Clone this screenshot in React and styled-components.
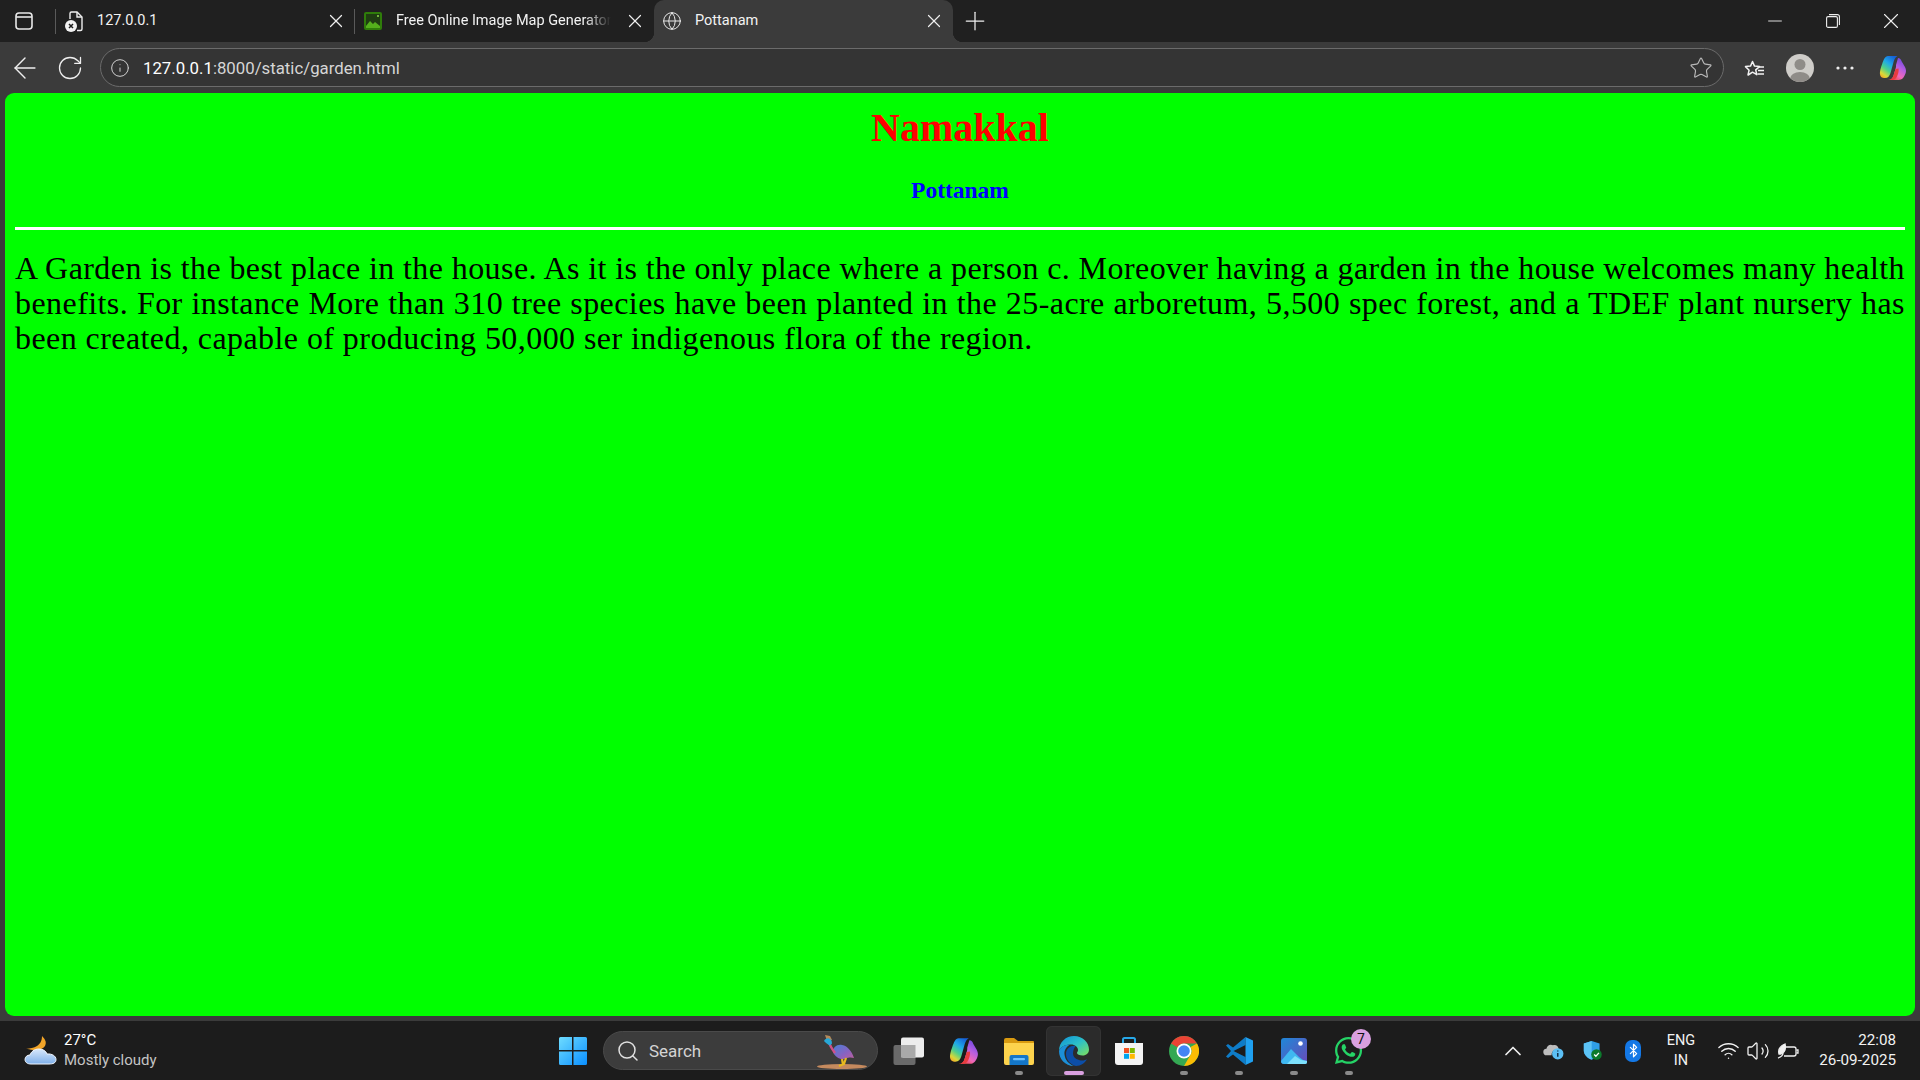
import React from 'react';
import styled, { createGlobalStyle } from 'styled-components';
import { X, Plus, ArrowLeft, RotateCw, Info, Star, Globe, Search, ChevronUp, Wifi, Volume2, Minus, Bluetooth } from 'lucide-react';
import { FaWhatsapp } from 'react-icons/fa';

const Global = createGlobalStyle`
    html, body { margin: 0; padding: 0; height: 100%; background: #1c1c1c; overflow: hidden; }
    #root { height: 100%; }
    * { box-sizing: border-box; }
`;

const Screen = styled.div`
    height: 1080px;
    width: 1920px;
    display: flex;
    flex-direction: column;
    font-family: Roboto, "Noto Sans", sans-serif;
    color: #fff;
`;

/* tab strip */
const TabStrip = styled.div`
    height: 42px;
    flex: none;
    display: flex;
    align-items: stretch;
    padding: 0 0 1px 6px;
    background: #202020;
`;

const SideButton = styled.div`
    width: 50px;
    padding-left: 9px;
    display: flex;
    align-items: center;
`;

const Tab = styled.div`
    position: relative;
    width: 299px;
    margin-bottom: ${p => (p.$active ? '-1px' : '0')};
    display: flex;
    align-items: center;
    padding: 0 8px ${p => (p.$active ? '1px' : '0')} 8px;
    gap: 13px;
    font-size: 14.5px;
    color: #f2f2f2;
    border-radius: ${p => (p.$active ? '10px 10px 0 0' : '0')};
    background: ${p => (p.$active ? '#3b3b3b' : 'transparent')};
    ${p => p.$active && `
        &::before, &::after {
            content: "";
            position: absolute;
            bottom: 0;
            width: 10px;
            height: 10px;
        }
        &::before { left: -10px; background: radial-gradient(circle at 0 0, transparent 10px, #3b3b3b 10.5px); }
        &::after { right: -10px; background: radial-gradient(circle at 100% 0, transparent 10px, #3b3b3b 10.5px); }
    `}
    ${p => p.$divider && `
        &::before {
            content: "";
            position: absolute;
            left: -1px;
            top: 9px;
            height: 25px;
            width: 1px;
            background: #5a5a5a;
        }
    `}
`;

const TabIcon = styled.span`
    width: 20px;
    height: 20px;
    flex: none;
    display: flex;
    align-items: center;
    justify-content: center;
`;

const TabTitle = styled.span`
    flex: 1;
    white-space: nowrap;
    overflow: hidden;
    ${p => p.$fade && `
        -webkit-mask-image: linear-gradient(to right, #000 88%, transparent 100%);
        mask-image: linear-gradient(to right, #000 88%, transparent 100%);
    `}
`;

const NewTab = styled.div`
    width: 44px;
    display: flex;
    align-items: center;
    justify-content: center;
`;

const WindowButtons = styled.div`
    margin-left: auto;
    display: flex;
`;

const WindowButton = styled.div`
    width: 58px;
    display: flex;
    align-items: center;
    justify-content: center;
`;

/* address bar row */
const Toolbar = styled.div`
    height: 51px;
    flex: none;
    display: flex;
    align-items: center;
    padding: 0 2px;
    background: #3b3b3b;
`;

const ToolButton = styled.div`
    width: ${p => p.$w || 45}px;
    height: 40px;
    flex: none;
    display: flex;
    align-items: center;
    justify-content: center;
`;

const AddressBar = styled.div`
    flex: 1;
    height: 39px;
    margin: 0 8px 0 8px;
    padding: 0 10px 0 9px;
    display: flex;
    align-items: center;
    gap: 13px;
    border: 1px solid #6b6b6b;
    border-radius: 20px;
    background: #343434;
`;

const Url = styled.span`
    flex: 1;
    font-size: 16.8px;
    color: #d6d6d6;
    span { color: #fff; }
`;

/* the page */
const PageFrame = styled.div`
    flex: 1;
    padding: 0 5px 5px;
    background: #3b3b3b;
    min-height: 0;
`;

const Page = styled.main`
    height: 100%;
    padding: 0 10px;
    background: #00ff00;
    border-radius: 9px;
    font-family: "Liberation Serif", "Times New Roman", serif;
    color: #000;
`;

const Title = styled.h1`
    margin: 0;
    padding-top: 11px;
    font-size: 40px;
    font-weight: bold;
    text-align: center;
    color: #ff0000;
`;

const SubTitle = styled.h2`
    margin: 26px 0 0;
    font-size: 23.5px;
    font-weight: bold;
    text-align: center;
    color: #0000ff;
`;

const Rule = styled.hr`
    margin: 23px 0 0;
    height: 3px;
    border: 0;
    background: #fff;
`;

const Article = styled.div`
    margin-top: 21px;
    font-size: 32px;
    line-height: 34.8px;
    letter-spacing: 0.43px;
`;

const Line = styled.div`
    word-spacing: ${p => (p.$last ? '0' : '-3px')};
    text-align: ${p => (p.$last ? 'left' : 'justify')};
    text-align-last: ${p => (p.$last ? 'left' : 'justify')};
`;

/* taskbar */
const Taskbar = styled.footer`
    height: 59px;
    flex: none;
    display: flex;
    align-items: center;
    background: #1c1c1c;
`;

const Weather = styled.div`
    width: 545px;
    flex: none;
    padding-left: 22px;
    display: flex;
    align-items: center;
    gap: 6px;
`;

const WeatherText = styled.div`
    padding-bottom: 2px;
    font-size: 15px;
    line-height: 20px;
    color: #fff;
    small { display: block; font-size: 15px; color: #c4c4c4; }
`;

const TaskItem = styled.div`
    position: relative;
    width: ${p => p.$w || 55}px;
    height: 50px;
    flex: none;
    display: flex;
    align-items: center;
    justify-content: center;
    border-radius: 6px;
    ${p => p.$active && `
        background: #2b2b2b;
        box-shadow: inset 0 0 0 1px #333;
    `}
    ${p => (p.$running || p.$active) && `
        &::after {
            content: "";
            position: absolute;
            bottom: 1px;
            left: 50%;
            transform: translateX(-50%);
            width: ${p.$active ? 20 : 8}px;
            height: 4px;
            border-radius: 2px;
            background: ${p.$active ? '#d9a0e0' : '#8a8a8a'};
        }
    `}
`;

const SearchBox = styled.div`
    width: 275px;
    height: 39px;
    flex: none;
    margin: 0 3px;
    padding: 0 8px 0 12px;
    display: flex;
    align-items: center;
    gap: 9px;
    border: 1px solid #4a4a4a;
    border-radius: 20px;
    background: #3c3c3c;
    font-size: 17px;
    color: #d4d4d4;
    span { flex: 1; }
`;

const Badge = styled.span`
    position: absolute;
    top: 3px;
    right: 5px;
    width: 20px;
    height: 20px;
    border-radius: 50%;
    display: flex;
    align-items: center;
    justify-content: center;
    font-size: 14px;
    background: #d9a0e0;
    color: #111;
`;

const Tray = styled.div`
    margin-left: auto;
    display: flex;
    align-items: center;
    padding-right: 24px;
`;

const TrayIcon = styled.div`
    width: ${p => p.$w || 40}px;
    height: 30px;
    flex: none;
    display: flex;
    align-items: center;
    justify-content: center;
`;

const TrayText = styled.div`
    width: ${p => p.$w || 56}px;
    flex: none;
    font-size: 14.5px;
    line-height: 20px;
    text-align: center;
    color: #f2f2f2;
`;

const Clock = styled(TrayText)`
    width: 93px;
    padding-bottom: 2px;
    font-size: 15.2px;
    text-align: right;
`;

const BluetoothPill = styled.span`
    width: 16px;
    height: 22px;
    border-radius: 7px;
    background: #1478e6;
    display: flex;
    align-items: center;
    justify-content: center;
`;

const SidebarIcon = () => (
    <svg width="18" height="18" viewBox="0 0 18 18" fill="none" stroke="#e8e8e8" strokeWidth="1.6">
        <rect x="1" y="1" width="16" height="16" rx="3" />
        <path d="M1 5h16" />
    </svg>
);

const FileErrorIcon = () => (
    <svg width="20" height="22" viewBox="0 0 20 22" fill="none">
        <path d="M6 9V3.5A1.5 1.5 0 0 1 7.5 2H13l5 5v12a1.5 1.5 0 0 1-1.5 1.5H13" stroke="#ededed" strokeWidth="1.4" />
        <path d="M13 2v5h5" stroke="#ededed" strokeWidth="1.4" />
        <circle cx="7" cy="16" r="6" fill="#f2f2f2" />
        <path d="M5 14l4 4M9 14l-4 4" stroke="#1d1d1d" strokeWidth="1.5" />
    </svg>
);

const ImageMapIcon = () => (
    <svg width="20" height="20" viewBox="0 0 20 20">
        <rect x="1" y="1" width="18" height="18" rx="2" fill="#2f7d0a" />
        <rect x="3" y="3" width="14" height="14" fill="#1f3d12" />
        <path d="M3 15l4-5 3 3 2-2 5 4v2H3z" fill="#54b01c" />
        <circle cx="15" cy="5" r="1" fill="#8fdc4c" />
    </svg>
);

const RestoreIcon = () => (
    <svg width="14" height="14" viewBox="0 0 14 14" fill="none" stroke="#eee" strokeWidth="1.1">
        <rect x="0.6" y="2.6" width="10.8" height="10.8" rx="1.5" />
        <path d="M3 .6h8.4a2 2 0 0 1 2 2V11" />
    </svg>
);

const FavoritesIcon = () => (
    <svg width="22" height="22" viewBox="0 0 22 22" fill="none" stroke="#f2f2f2" strokeWidth="1.5" strokeLinejoin="round">
        <path d="M9 3l2 4.6 5 .5-3.8 3.3 1.1 4.8L9 13.7l-4.3 2.8-.2-.1 1.1-4.7L2 8.1l5-.5z" transform="translate(-.5 1.5)" />
        <path d="M14 10h6M14 13.5h6M13.5 17h6.5" />
    </svg>
);

const Avatar = () => (
    <svg width="28" height="28" viewBox="0 0 28 28">
        <defs><clipPath id="av"><circle cx="14" cy="14" r="14" /></clipPath></defs>
        <circle cx="14" cy="14" r="14" fill="#cfcdc9" />
        <g clipPath="url(#av)" fill="#8f8c88">
            <circle cx="14" cy="10.5" r="5.5" />
            <ellipse cx="14" cy="25" rx="10" ry="7" />
        </g>
    </svg>
);

const Dots = () => (
    <svg width="18" height="4" viewBox="0 0 18 4" fill="#eee">
        <circle cx="2" cy="2" r="1.6" /><circle cx="9" cy="2" r="1.6" /><circle cx="16" cy="2" r="1.6" />
    </svg>
);

const CopilotIcon = ({ id, size = 28 }) => (
    <svg width={size} height={size} viewBox="0 0 28 28">
        <defs>
            <linearGradient id={id + 'a'} x1="0.75" y1="0" x2="0.15" y2="1">
                <stop offset="0" stopColor="#1560d8" />
                <stop offset="0.35" stopColor="#1fa8e8" />
                <stop offset="0.62" stopColor="#4fd08a" />
                <stop offset="0.85" stopColor="#d8d838" />
                <stop offset="1" stopColor="#f6a828" />
            </linearGradient>
            <linearGradient id={id + 'b'} x1="0.8" y1="0" x2="0.25" y2="1">
                <stop offset="0" stopColor="#6a48e0" />
                <stop offset="0.4" stopColor="#b65ee0" />
                <stop offset="0.72" stopColor="#f068b8" />
                <stop offset="1" stopColor="#f0463c" />
            </linearGradient>
        </defs>
        <path d="M9 2h9.5c-2 1-3 3-3.800 5.500L11.500 19c-1 3-2.500 5-5.500 5H5c-3 0-4.500-3-4-6 .4-3 1.200-5.500 2-7.500C4.500 6 6 2 9 2z" fill={`url(#${id}a)`} />
        <path d="M19 4c2 0 3 1.500 3.600 3.200L26 13c1.200 2.500 1.300 4.500.5 6.500-1.300 3.700-3.500 6.500-7 6.500H9c3 0 4.700-2 5.500-4.500l1.700-5.500c.7-2 1-3.500.8-5z" fill={`url(#${id}b)`} />
        <path d="M16.500 15l3-.5c.5 2.500-.3 5.500-1.500 8-1 2-2.500 3.500-4.500 3.500H9c3 0 4.700-2 5.500-4.500z" fill="#e83c40" />
    </svg>
);

const WeatherIcon = () => (
    <svg width="36" height="32" viewBox="0 0 36 32">
        <defs>
            <linearGradient id="cl" x1="0" y1="0" x2="0" y2="1">
                <stop offset="0" stopColor="#d8e8fb" />
                <stop offset="1" stopColor="#7fb0ea" />
            </linearGradient>
        </defs>
        <path d="M20 1c3 3 5 6 3 10-2 3-7 5-12 4-3-.5-5-1-7-1 4-1 8-1 11-3 3-2 5-5 5-10z" fill="#f2a528" />
        <path d="M9 29c-4 0-6-2-6-4.500S5 20 8 20c1-3 4-6 9-6 4 0 7 2 8 5 5-.5 9 2 9 5.500S31 29 27 29z" fill="url(#cl)" stroke="#f3f8ff" strokeWidth="1" />
    </svg>
);

const WindowsLogo = () => (
    <svg width="30" height="30" viewBox="0 0 30 30">
        <defs>
            <linearGradient id="win" x1="0" y1="0" x2="1" y2="1">
                <stop offset="0" stopColor="#6fdcff" />
                <stop offset="1" stopColor="#0a8fff" />
            </linearGradient>
        </defs>
        <path d="M1 2.500A1.500 1.500 0 0 1 2.500 1H14v13H1zM15.500 1H27.500A1.500 1.500 0 0 1 29 2.500V14H15.500zM1 15.500h13V29H2.500A1.500 1.500 0 0 1 1 27.500zM15.500 15.500H29v12A1.500 1.500 0 0 1 27.500 29h-12z" fill="url(#win)" />
    </svg>
);

const SearchBird = () => (
    <svg width="52" height="38" viewBox="0 0 52 38">
        <defs>
            <linearGradient id="birdBody" x1="0" y1="0" x2="1" y2="1">
                <stop offset="0" stopColor="#4a7ed8" />
                <stop offset="0.6" stopColor="#8a62c0" />
                <stop offset="1" stopColor="#c0609a" />
            </linearGradient>
        </defs>
        <ellipse cx="25" cy="34.5" rx="25" ry="2.5" fill="#c58a5e" />
        <path d="M24 27c-4-1-7-4-8-7 0-5 4-8 9-7 6 1 10 7 12 13-3-1-6-.5-8 .5-2 .5-3.500 1-5 .5z" fill="url(#birdBody)" />
        <path d="M12 10c1 4 3 7 6 11" stroke="#d0508a" strokeWidth="2.5" fill="none" />
        <path d="M8 3l5 1 2 4-5 1z" fill="#b48a5a" />
        <path d="M7 9c1-2 3-3 5-2.500s3 2.500 3 5l-2 2c-2-1-4-2-6-4.500z" fill="#28a8d8" />
        <path d="M25 27l1 6M29 26l-2 6-5 2" stroke="#e7b91f" strokeWidth="2.2" fill="none" />
    </svg>
);

const TaskViewIcon = () => (
    <svg width="31" height="28" viewBox="0 0 31 28">
        <rect x="0.5" y="8" width="22" height="20" rx="2" fill="#6a6a6a" />
        <rect x="8" y="0.5" width="23" height="20" rx="2" fill="#ededed" />
        <rect x="8" y="8" width="14.5" height="12.5" fill="#a9a9a9" />
    </svg>
);

const FolderIcon = () => (
    <svg width="32" height="28" viewBox="0 0 32 28">
        <path d="M1 3a2 2 0 0 1 2-2h8l4 3h15a1 1 0 0 1 1 1v4H1z" fill="#d99a10" />
        <path d="M1 6h30v20a2 2 0 0 1-2 2H3a2 2 0 0 1-2-2z" fill="#fdd34d" />
        <path d="M6.500 28v-8a2 2 0 0 1 2-2h15a2 2 0 0 1 2 2v8z" fill="#1476c8" />
        <rect x="10" y="21" width="12" height="2.2" rx="1" fill="#6dc2ff" />
    </svg>
);

const EdgeIcon = () => (
    <svg width="30" height="30" viewBox="0 0 30 30">
        <defs>
            <linearGradient id="edgeTop" x1="0" y1="0" x2="1" y2="1">
                <stop offset="0" stopColor="#0f8fd8" />
                <stop offset="0.5" stopColor="#2cc0c8" />
                <stop offset="1" stopColor="#7fe05c" />
            </linearGradient>
        </defs>
        <path d="M0 15C0 6 7 0 15 0c9 0 15 6.500 15 13.500 0 3.500-2.500 6-6.500 6-3 0-5.500-1-5.500-2.500 0-1 1-1.500 1-3 0-3-3-5.500-7-5.500C6 8.500 1 11 0 15z" fill="url(#edgeTop)" />
        <path d="M0 15c1-4 6-6.500 11-6.500-4 2.500-6 6-5.500 10 .5 5 4 9.500 9.500 11.500C6 30 0 23 0 15z" fill="#1c8fd8" />
        <path d="M16.500 10c-4-1-9.500 2-9.500 8 0 6 5 11 10 12 5 0 9-3 11-7-2 1.500-5 2-8 1-4-1-6-3.500-6-6.500 0-2.500 1-5.500 2.500-7.500z" fill="#0c4ea8" />
    </svg>
);

const StoreIcon = () => (
    <svg width="30" height="30" viewBox="0 0 30 30">
        <path d="M9 7V3.500A1.500 1.500 0 0 1 10.500 2h9A1.500 1.500 0 0 1 21 3.500V7" fill="none" stroke="#27a8e8" strokeWidth="2" />
        <path d="M1 7h28v19a3 3 0 0 1-3 3H4a3 3 0 0 1-3-3z" fill="#f4f4f4" />
        <rect x="10" y="12" width="5" height="5" fill="#f25022" />
        <rect x="15.8" y="12" width="5" height="5" fill="#7fba00" />
        <rect x="10" y="17.8" width="5" height="5" fill="#00a4ef" />
        <rect x="15.8" y="17.8" width="5" height="5" fill="#ffb900" />
    </svg>
);

const ChromeIcon = () => (
    <svg width="30" height="30" viewBox="0 0 30 30">
        <circle cx="15" cy="15" r="15" fill="#34a853" />
        <path d="M15 0a15 15 0 0 1 13 7.500H15a7.500 7.500 0 0 0-6.500 3.750L2 7.500A15 15 0 0 1 15 0z" fill="#ea4335" />
        <path d="M28 7.500A15 15 0 0 1 15 30l6.500-11.250A7.500 7.500 0 0 0 21.500 11z" fill="#fbbc04" />
        <circle cx="15" cy="15" r="7.5" fill="#fff" />
        <circle cx="15" cy="15" r="5.8" fill="#4285f4" />
    </svg>
);

const VsCodeIcon = () => (
    <svg width="30" height="30" viewBox="0 0 30 30">
        <path d="M2 9.500l2-1.500 5 3.500L21.500 1v8L9.500 15l12 6v8L9 18.500 4 22l-2-1.500 5-5.500z" fill="#0e7cc8" />
        <path d="M21.500 1L29 4.500v21L21.500 29z" fill="#1fa0f0" />
    </svg>
);

const PhotosIcon = () => (
    <svg width="26" height="26" viewBox="0 0 26 26">
        <defs>
            <linearGradient id="ph" x1="0" y1="0" x2="1" y2="1">
                <stop offset="0" stopColor="#1e88d8" />
                <stop offset="1" stopColor="#6a4ab8" />
            </linearGradient>
        </defs>
        <rect width="26" height="26" rx="3" fill="url(#ph)" />
        <circle cx="19.5" cy="5.5" r="2.3" fill="#fff" />
        <path d="M0 23l10-12 8 8 4 3 4 1v1a2 2 0 0 1-2 2H3a3 3 0 0 1-3-3z" fill="#3fb8f0" />
        <path d="M6 26l8-8 6 4 6 1v1a2 2 0 0 1-2 2z" fill="#7de0fb" />
    </svg>
);

const CloudInfoIcon = () => (
    <svg width="21" height="18" viewBox="0 0 22 19">
        <path d="M4 14a3.500 3.500 0 0 1-.5-7C4.500 3 8 2 10.500 3.500c3-1 6 1 6 4.500H14c-3 0-5 3-5 6z" fill="#bdbdbd" />
        <circle cx="15.5" cy="12.5" r="6" fill="#5cc0f5" />
        <path d="M15.500 11.500v4M15.500 9v1" stroke="#12324a" strokeWidth="1.6" />
    </svg>
);

const ShieldIcon = () => (
    <svg width="20" height="21" viewBox="0 0 22 24">
        <path d="M9.500 1l9 3v8c0 5-4 8.500-9 10.500C4.500 20.500.5 17 .5 12V4z" fill="#2f9fe8" />
        <path d="M9.500 1v21.500C4.500 20.500.5 17 .5 12V4z" fill="#5cc3f5" />
        <circle cx="15" cy="16.5" r="6" fill="#0c7a2c" />
        <path d="M12.300 16.500l2 2 3.500-3.800" stroke="#fff" strokeWidth="1.5" fill="none" />
    </svg>
);

const BatteryIcon = () => (
    <svg width="22" height="18" viewBox="0 0 22 18" fill="none" stroke="#f0f0f0" strokeWidth="1.3">
        <path d="M8 5h9a2 2 0 0 1 2 2v5a2 2 0 0 1-2 2H7" />
        <path d="M19.500 8h1.500v3h-1.500" />
        <path d="M1 16c3-1 5-3 5-5" />
        <path d="M2 12c-1-4 1-8 6-10 1 4 0 8-4 10z" fill="#f0f0f0" />
    </svg>
);

export default function App() {
    return (
        <Screen>
            <Global />
            <TabStrip>
                <SideButton><SidebarIcon /></SideButton>
                <Tab $divider>
                    <TabIcon><FileErrorIcon /></TabIcon>
                    <TabTitle>127.0.0.1</TabTitle>
                    <X size={22} strokeWidth={1.3} color="#eee" />
                </Tab>
                <Tab $divider>
                    <TabIcon><ImageMapIcon /></TabIcon>
                    <TabTitle $fade>Free Online Image Map Generator</TabTitle>
                    <X size={22} strokeWidth={1.3} color="#eee" />
                </Tab>
                <Tab $active>
                    <TabIcon><Globe size={24} strokeWidth={1.2} color="#e8e8e8" /></TabIcon>
                    <TabTitle>Pottanam</TabTitle>
                    <X size={22} strokeWidth={1.3} color="#eee" />
                </Tab>
                <NewTab><Plus size={30} strokeWidth={1} color="#eee" /></NewTab>
                <WindowButtons>
                    <WindowButton><Minus size={22} strokeWidth={1} color="#eee" /></WindowButton>
                    <WindowButton><RestoreIcon /></WindowButton>
                    <WindowButton><X size={26} strokeWidth={1} color="#eee" /></WindowButton>
                </WindowButtons>
            </TabStrip>
            <Toolbar>
                <ToolButton><ArrowLeft size={34} strokeWidth={1} color="#eee" /></ToolButton>
                <ToolButton><RotateCw size={28} strokeWidth={1.1} color="#eee" /></ToolButton>
                <AddressBar>
                    <Info size={20} strokeWidth={1.2} color="#d0d0d0" />
                    <Url><span>127.0.0.1</span>:8000/static/garden.html</Url>
                    <Star size={24} strokeWidth={1.15} color="#b8b8b8" />
                </AddressBar>
                <ToolButton><FavoritesIcon /></ToolButton>
                <ToolButton><Avatar /></ToolButton>
                <ToolButton><Dots /></ToolButton>
                <ToolButton $w={51}><CopilotIcon id="cpa" /></ToolButton>
            </Toolbar>
            <PageFrame>
                <Page>
                    <Title>Namakkal</Title>
                    <SubTitle>Pottanam</SubTitle>
                    <Rule />
                    <Article>
                        <Line>A Garden is the best place in the house. As it is the only place where a person c. Moreover having a garden in the house welcomes many health</Line>
                        <Line>benefits. For instance More than 310 tree species have been planted in the 25-acre arboretum, 5,500 spec forest, and a TDEF plant nursery has</Line>
                        <Line $last>been created, capable of producing 50,000 ser indigenous flora of the region.</Line>
                    </Article>
                </Page>
            </PageFrame>
            <Taskbar>
                <Weather>
                    <WeatherIcon />
                    <WeatherText>27°C<small>Mostly cloudy</small></WeatherText>
                </Weather>
                <TaskItem><WindowsLogo /></TaskItem>
                <SearchBox>
                    <Search size={24} strokeWidth={1.5} color="#e0e0e0" />
                    <span>Search</span>
                    <SearchBird />
                </SearchBox>
                <TaskItem><TaskViewIcon /></TaskItem>
                <TaskItem><CopilotIcon id="cpb" size={30} /></TaskItem>
                <TaskItem $running><FolderIcon /></TaskItem>
                <TaskItem $active><EdgeIcon /></TaskItem>
                <TaskItem><StoreIcon /></TaskItem>
                <TaskItem $running><ChromeIcon /></TaskItem>
                <TaskItem $running><VsCodeIcon /></TaskItem>
                <TaskItem $running><PhotosIcon /></TaskItem>
                <TaskItem $running>
                    <FaWhatsapp size={31} color="#25d366" />
                    <Badge>7</Badge>
                </TaskItem>
                <Tray>
                    <TrayIcon><ChevronUp size={28} strokeWidth={1.5} color="#eee" /></TrayIcon>
                    <TrayIcon><CloudInfoIcon /></TrayIcon>
                    <TrayIcon><ShieldIcon /></TrayIcon>
                    <TrayIcon><BluetoothPill><Bluetooth size={15} strokeWidth={2} color="#fff" /></BluetoothPill></TrayIcon>
                    <TrayText>ENG<br />IN</TrayText>
                    <TrayIcon $w={4} />
                    <TrayIcon $w={30}><Wifi size={23} strokeWidth={1.5} color="#f0f0f0" /></TrayIcon>
                    <TrayIcon $w={30}><Volume2 size={24} strokeWidth={1.3} color="#f0f0f0" /></TrayIcon>
                    <TrayIcon $w={30}><BatteryIcon /></TrayIcon>
                    <Clock>22:08<br />26-09-2025</Clock>
                </Tray>
            </Taskbar>
        </Screen>
    );
}
